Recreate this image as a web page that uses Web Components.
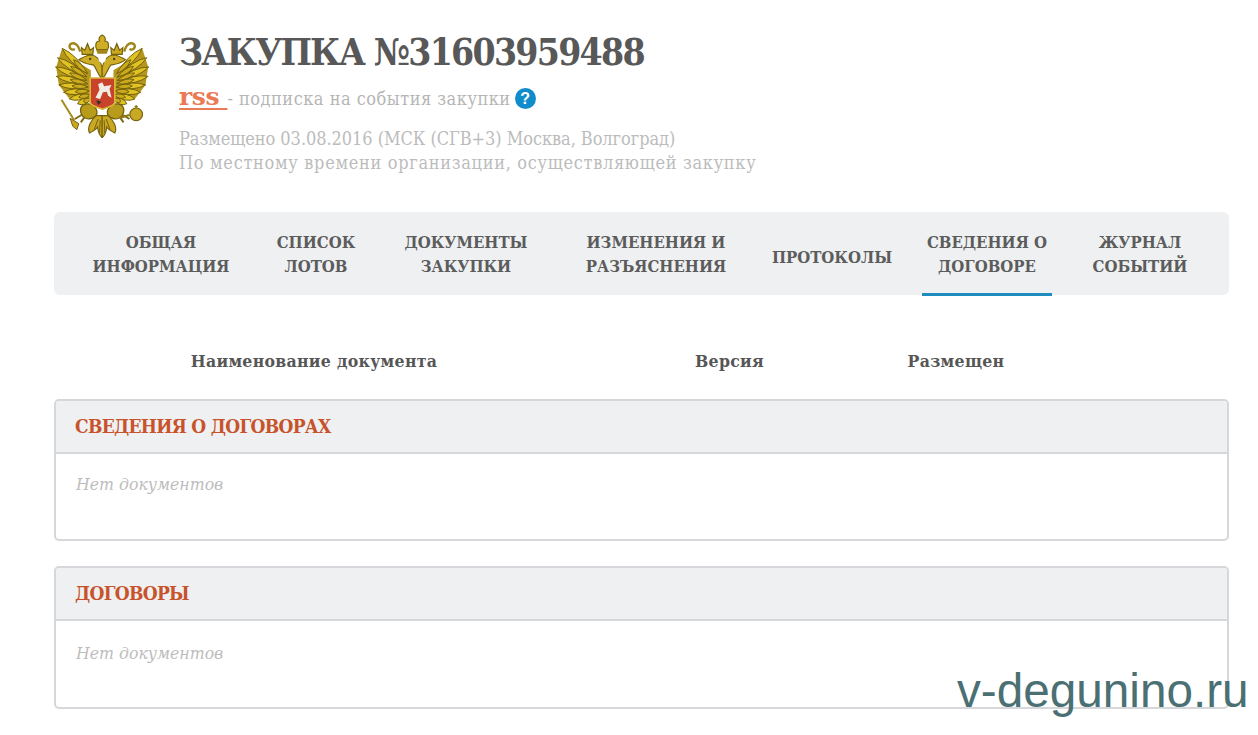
<!DOCTYPE html>
<html lang="ru"><head><meta charset="utf-8"><title>Закупка</title>
<style>
html,body{margin:0;padding:0;background:#fff}
body{font-family:"DejaVu Serif Condensed","DejaVu Serif",serif;}
</style></head><body>
<x-page>
  <x-header></x-header>
  <x-tabs>
    <x-tab w="186">ОБЩАЯ<br>ИНФОРМАЦИЯ</x-tab>
    <x-tab w="124">СПИСОК<br>ЛОТОВ</x-tab>
    <x-tab w="176">ДОКУМЕНТЫ<br>ЗАКУПКИ</x-tab>
    <x-tab w="204">ИЗМЕНЕНИЯ И<br>РАЗЪЯСНЕНИЯ</x-tab>
    <x-tab w="148" style="padding-top:5px">ПРОТОКОЛЫ</x-tab>
    <x-tab w="130" active style="margin:0 16px">СВЕДЕНИЯ О<br>ДОГОВОРЕ</x-tab>
    <x-tab w="144">ЖУРНАЛ<br>СОБЫТИЙ</x-tab>
  </x-tabs>
  <x-columns></x-columns>
  <x-panel title="СВЕДЕНИЯ О ДОГОВОРАХ">Нет документов</x-panel>
  <x-panel title="ДОГОВОРЫ" style="--pt:20px;height:143px">Нет документов</x-panel>
</x-page>
<x-watermark>v-degunino.ru</x-watermark>
<script>
const def=(n,html,init)=>customElements.define(n,class extends HTMLElement{
  constructor(){super();this.attachShadow({mode:'open'}).innerHTML=html;}
  connectedCallback(){init&&init(this)}
});
def('x-page',`<style>:host{display:flex;flex-direction:column;padding:33px 29px 0 54px}</style><slot></slot>`);

const tips=[[64,84],[50,112],[44,140],[46,168],[54,194],[68,216],[86,236],[110,250]];
const bases=[[140,160],[138,170],[138,180],[140,190],[142,200],[146,212],[148,224],[150,236]];
const leaf=(b,t,w)=>{const dx=t[0]-b[0],dy=t[1]-b[1],l=Math.hypot(dx,dy),nx=-dy/l*w,ny=dx/l*w,mx=b[0]+dx*.6,my=b[1]+dy*.6;
  return `M${b[0]} ${b[1]}Q${mx+nx} ${my+ny} ${t[0]} ${t[1]}Q${mx-nx} ${my-ny} ${b[0]} ${b[1]}Z`};
const feathers=tips.map((t,i)=>`<path d="${leaf(bases[i],t,17)}" fill="#e0c224" stroke="#75620f" stroke-width="3"/>`).join('')
 +tips.map((t,i)=>{const k=.55,p=[bases[i][0]+(t[0]-bases[i][0])*k,bases[i][1]+(t[1]-bases[i][1])*k];return `<path d="${leaf(bases[i],p,13)}" fill="#cbaa1e" stroke="#75620f" stroke-width="3"/>`}).join('');
const half=`<path d="M150 150 L100 118 L64 84 L46 140 L54 194 L86 236 L150 240Z" fill="#b4961a"/>${feathers}
<path d="M184 176 C170 162 166 142 158 134 C148 132 130 132 114 118 C126 112 136 104 152 104 C170 106 180 124 184 142Z" fill="#cfae26" stroke="#75620f" stroke-width="3.5"/>
<circle cx="148" cy="116" r="3.5" fill="#4a3c08"/>
<path d="M124 102 L122 82 L132 90 L140 70 L148 90 L158 82 L156 102Z" fill="#c9a822" stroke="#75620f" stroke-width="3.5"/>
<path d="M118 94 C112 72 100 64 88 72 C82 82 92 92 102 86" fill="none" stroke="#a0861a" stroke-width="7"/>
<path d="M150 252 C128 246 116 260 120 276 C124 294 142 300 158 292 C172 284 174 264 150 252Z" fill="#b99b1c" stroke="#75620f" stroke-width="4"/>
<path d="M122 284 L102 296 M130 292 L120 306" stroke="#7d6a12" stroke-width="6"/>
<path d="M166 286 C150 300 138 322 146 338 C158 332 166 328 170 320 C172 334 176 346 184 352 L184 286Z" fill="#c9a822" stroke="#75620f" stroke-width="3.5"/>
<path d="M172 296 L160 328 M178 300 L176 338" stroke="#75620f" stroke-width="3"/>`;
def('x-emblem',`<style>:host{display:block;width:97px;height:105px;flex:none}svg{display:block}</style>
<svg width="97" height="105" viewBox="40 38 290 315" role="img" aria-label="Герб">
<defs><filter id="b"><feGaussianBlur stdDeviation="1.6"/></filter></defs>
<g filter="url(#b)">
<g>${half}</g><g transform="translate(368 0) scale(-1 1)">${half}</g>
<path d="M62 238 L100 300" stroke="#a68c1c" stroke-width="6"/>
<path d="M88 294 L114 310 L108 328 L96 318Z" fill="#c9a822" stroke="#75620f" stroke-width="3"/>
<circle cx="286" cy="282" r="19" fill="#c9a822" stroke="#75620f" stroke-width="3.5"/>
<path d="M286 254 v10 M281 259 h10" stroke="#8d761a" stroke-width="4"/>
<path d="M266 284 L238 292" stroke="#8d761a" stroke-width="7"/>
<path d="M184 44 C176 48 172 56 176 62 C164 62 162 76 168 88 L200 88 C206 76 204 62 192 62 C196 56 192 48 184 44Z" fill="#cfae26" stroke="#75620f" stroke-width="3.5"/>
<path d="M166 88 L202 88 L198 100 L170 100Z" fill="#a0861a"/>
<circle cx="184" cy="116" r="11" fill="#fff"/>
<path d="M148 173 H222 V246 C222 258 200 260 185 267 C170 260 148 258 148 246Z" fill="#c9432c" stroke="#d8b83a" stroke-width="5"/>
<path d="M164 232 L176 208 L172 192 L184 186 L190 198 L212 194 L206 206 L212 232 L202 226 L198 214 L186 216 L178 236Z" fill="#f1ece4"/>
<path d="M166 240 L182 244 L172 254Z" fill="#33302a"/>
</g></svg>`);

def('x-header',`<style>
:host{display:flex;gap:28px;height:179px}
.t{display:flex;flex-direction:column}
h1{margin:0;font:700 37px/38px "DejaVu Serif Condensed","DejaVu Serif",serif;color:#585858;height:38px;letter-spacing:-1.75px;white-space:nowrap}
.s{margin-top:13px;height:30px;display:flex;align-items:center;font-size:18px;line-height:30px;color:#b6b6b6;white-space:pre;letter-spacing:.5px}
a{color:#ea7a54;font:700 25px/30px "DejaVu Serif",serif;letter-spacing:-.4px;text-decoration:underline;text-underline-offset:3px;text-decoration-thickness:1.5px;margin-top:-4px}
.q{display:inline-block;width:21px;height:21px;border-radius:50%;background:#118ccb;color:#fff;font:700 16px/21px "Liberation Sans",sans-serif;letter-spacing:0;text-align:center;margin-left:4px;margin-top:-2px}
p{margin:13px 0 0;font-size:18px;line-height:24px;color:#bcbcbc;white-space:nowrap}
.l2{letter-spacing:.69px}.l1{letter-spacing:-.05px}
</style>
<x-emblem></x-emblem>
<div class="t"><h1>ЗАКУПКА №31603959488</h1>
<div class="s"><a>rss </a>- подписка на события закупки<span class="q">?</span></div>
<p><span class="l1">Размещено 03.08.2016 (МСК (СГВ+3) Москва, Волгоград)</span><br><span class="l2">По местному времени организации, осуществляющей закупку</span></p></div>`);

def('x-tabs',`<style>:host{display:flex;height:83px;background:#eef0f2;border-radius:6px;padding-left:14px}</style><slot></slot>`);
def('x-tab',`<style>
:host{display:flex;align-items:center;justify-content:center;box-sizing:border-box;text-align:center;height:84px;
font-size:16.6px;line-height:24px;font-weight:700;color:#5c5c5c;flex:none}
:host([active]){border-bottom:3px solid #1e8cbd;padding-top:3px}
</style><slot></slot>`,el=>{el.style.width=el.getAttribute('w')+'px'});

def('x-columns',`<style>:host{display:grid;grid-template-columns:520px 311px 142px;margin-top:54px;height:50px;
font-size:17.5px;line-height:24px;font-weight:700;color:#565656;text-align:center;white-space:nowrap;letter-spacing:.3px}</style>
<div>Наименование документа</div><div>Версия</div><div>Размещен</div>`);

def('x-panel',`<style>
:host{display:block;box-sizing:border-box;height:142px;border:2px solid #d5d7da;border-radius:5px;margin-bottom:25px;overflow:hidden;background:#fff}
h2{margin:0;box-sizing:border-box;height:53px;background:#eef0f2;border-bottom:2px solid #d5d7da;padding:0 19px;font-size:19px;letter-spacing:-.7px;font-weight:700;line-height:51px;color:#c8532b}
div{padding:var(--pt,18px) 20px 0;font-size:17.5px;line-height:24px;font-style:italic;color:#bdbdbd}
</style><h2></h2><div><slot></slot></div>`,el=>{el.shadowRoot.querySelector('h2').textContent=el.getAttribute('title');el.removeAttribute('title')});

def('x-watermark',`<style>:host{position:absolute;left:957px;top:665px;font:47.7px/52px "Liberation Sans",sans-serif;color:#4a7073;white-space:nowrap}</style><slot></slot>`);
</script>
</body></html>
